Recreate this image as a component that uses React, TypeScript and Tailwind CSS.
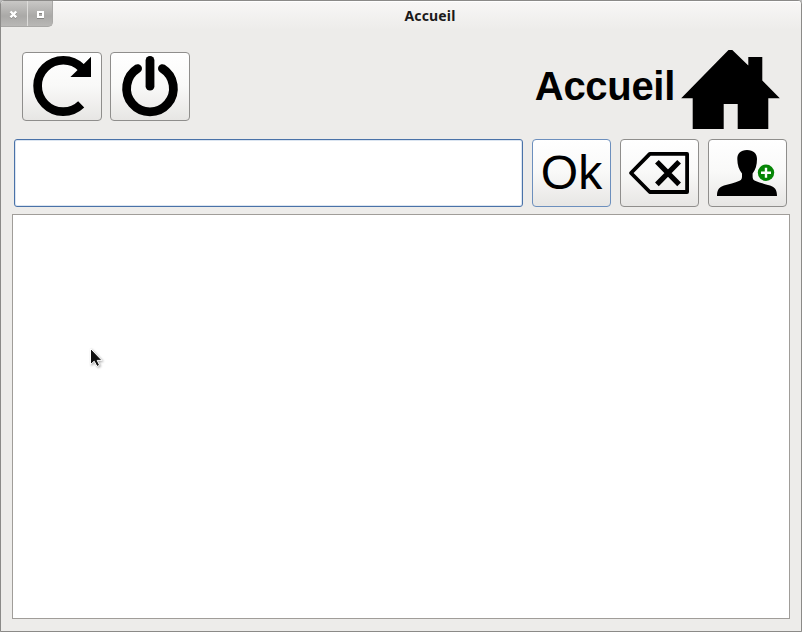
import type { ReactNode } from "react";

type ButtonProps = { label: string; className: string; children: ReactNode };

function ToolButton({ label, className, children }: ButtonProps) {
  return (
    <button
      aria-label={label}
      className={`flex shrink-0 items-center justify-center overflow-hidden rounded-[4px] border bg-linear-to-b from-white from-0% via-[#f9f9f8] via-49% to-[#e7e6e4] to-100% ${className}`}
    >
      {children}
    </button>
  );
}

function RefreshIcon() {
  return (
    <svg width="78" height="67" viewBox="23 53 78 67" className="shrink-0">
      <path d="M81.2 104.4A25.7 25.7 0 1 1 81.5 67.8" fill="none" stroke="#000" strokeWidth="8.7" />
      <path d="M91 56.7V77H70.4L77.6 70L83.5 64.2Z" />
    </svg>
  );
}

function PowerIcon() {
  return (
    <svg width="78" height="67" viewBox="111 53 78 67" className="shrink-0" fill="none" stroke="#000" strokeWidth="8.8" strokeLinecap="round">
      <path d="M137.6 68.6A23.4 23.4 0 1 0 162.4 68.6" />
      <path d="M150 60.4V86.2" />
    </svg>
  );
}

function HouseIcon() {
  return (
    <svg width="100" height="80" viewBox="681 50 100 80" className="shrink-0">
      <path d="M728.5 50H732.3L748.3 65.6V57H762.3V80.4L779.8 98.3H768.3V129H737.7V104H723.7V129H692.7V98.3H681.2Z" />
    </svg>
  );
}

function BackspaceIcon() {
  return (
    <svg width="77" height="66" viewBox="621 140 77 66" className="shrink-0" fill="none" stroke="#000">
      <path d="M649.8 153.9H687.1V192H649.8L631 173Z" strokeWidth="3.8" strokeLinejoin="round" />
      <path d="M656.9 161.7L679.1 184.4M679.1 161.7L656.9 184.4" strokeWidth="5.2" />
    </svg>
  );
}

function AddUserIcon() {
  return (
    <svg width="77" height="66" viewBox="709 140 77 66" className="shrink-0">
      <path d="M747 150C753.5 150 757 153.5 757 159C757 165 755.5 170 752.6 173.5V176C752.6 178.500 753 179.800 755 180.800C760 183 765 184 770 185.600C775 187.300 777 190 777 196H717C717 190 719 187.300 724 185.600C729 184 734.500 183 739.500 180.800C741.600 179.800 742 178.500 742 176V173.500C739 170 737.300 165 737.300 159C737.300 153.500 740.500 150 747 150Z" />
      <circle cx="766" cy="172.800" r="8.200" fill="#058505" />
      <path d="M766 167.800V177.800M761 172.800H771" stroke="#fff" strokeWidth="2.400" />
    </svg>
  );
}

function TitleBar() {
  return (
    <header className="flex h-[29px] shrink-0 items-start bg-linear-to-b from-[#f8f7f6] to-[#edecea] shadow-[inset_0_1px_0_#fff]">
      <div className="flex h-[26px] w-[52px] shrink-0 overflow-hidden rounded-br-[5px] border-r border-b border-[#a9a8a6] bg-linear-to-b from-[#c9c8c6] via-[#aaa9a7] via-60% to-[#b9b8b6]">
        <button aria-label="Fermer" className="w-[27px] shrink-0 border-r border-[#dddcda]">
          <svg width="25" height="25" viewBox="1 1 25 25" fill="none" strokeWidth="2.400">
            <path d="M10.500 12.300L16.300 18.100M16.300 12.300L10.500 18.100" stroke="#858482" />
            <path d="M10.500 11.500L16.300 17.300M16.300 11.500L10.500 17.300" stroke="#fff" />
          </svg>
        </button>
        <button aria-label="Agrandir" className="w-[24px] shrink-0">
          <svg width="24" height="25" viewBox="28 1 24 25" fill="none" strokeWidth="2">
            <path d="M38 13H43V18H38Z" stroke="#858482" />
            <path d="M38 12H43V17H38Z" stroke="#fff" />
          </svg>
        </button>
      </div>
      <h1 className="flex-1 pt-[6px] pl-[6px] text-center font-['Noto_Sans',sans-serif] text-[14px] leading-[18px] font-bold tracking-[0.15px] text-[#1b1a1a]">
        Accueil
      </h1>
    </header>
  );
}

function Cursor() {
  return (
    <svg width="16" height="22" viewBox="88 347 16 22" className="absolute top-[131px] left-[75px] drop-shadow-[1px_1px_1px_#0005]">
      <path d="M90.500 349.500V365.500L94.200 362.200L97 367.500L99.600 366.200L97.200 361.400H102Z" fill="#111" stroke="#fff" strokeWidth="1" />
    </svg>
  );
}

export default function App() {
  return (
    <div className="bg-[#bbb]">
      <main className="flex h-[632px] w-[802px] flex-col overflow-hidden rounded-t-[4px] border border-[#8b8a88] bg-[#edecea] font-['Liberation_Sans',sans-serif] text-black">
        <TitleBar />
        <section className="flex h-[109px] shrink-0 items-start pt-[20px] pr-[20px] pl-[21px]">
          <div className="flex gap-2 pt-[2px]">
            <ToolButton label="Actualiser" className="h-[69px] w-[80px] border-[#8f8e8c]"><RefreshIcon /></ToolButton>
            <ToolButton label="Éteindre" className="h-[69px] w-[80px] border-[#8f8e8c]"><PowerIcon /></ToolButton>
          </div>
          <div className="ml-auto flex items-start">
            <h2 className="mr-[6px] pt-[13px] text-[40px] leading-[46px] font-bold tracking-[-0.3px]">Accueil</h2>
            <HouseIcon />
          </div>
        </section>
        <section className="flex h-[68px] shrink-0 gap-[9px] pr-[14px] pl-[13px]">
          <input aria-label="Saisie" className="h-[68px] min-w-0 flex-1 rounded-[3px] border border-[#4a72a8] bg-white shadow-[inset_0_0_0_1px_#dbe5f1] outline-none" />
          <ToolButton label="Ok" className="h-[68px] w-[79px] border-[#6c8fbd]">
            <span className="text-[48px] leading-[54px]">Ok</span>
          </ToolButton>
          <ToolButton label="Effacer" className="h-[68px] w-[79px] border-[#8f8e8c]"><BackspaceIcon /></ToolButton>
          <ToolButton label="Ajouter" className="h-[68px] w-[79px] border-[#8f8e8c]"><AddUserIcon /></ToolButton>
        </section>
        <section className="relative mx-[11px] mt-[7px] mb-[12px] flex-1 border border-[#a09d99] bg-white">
          <Cursor />
        </section>
      </main>
    </div>
  );
}
